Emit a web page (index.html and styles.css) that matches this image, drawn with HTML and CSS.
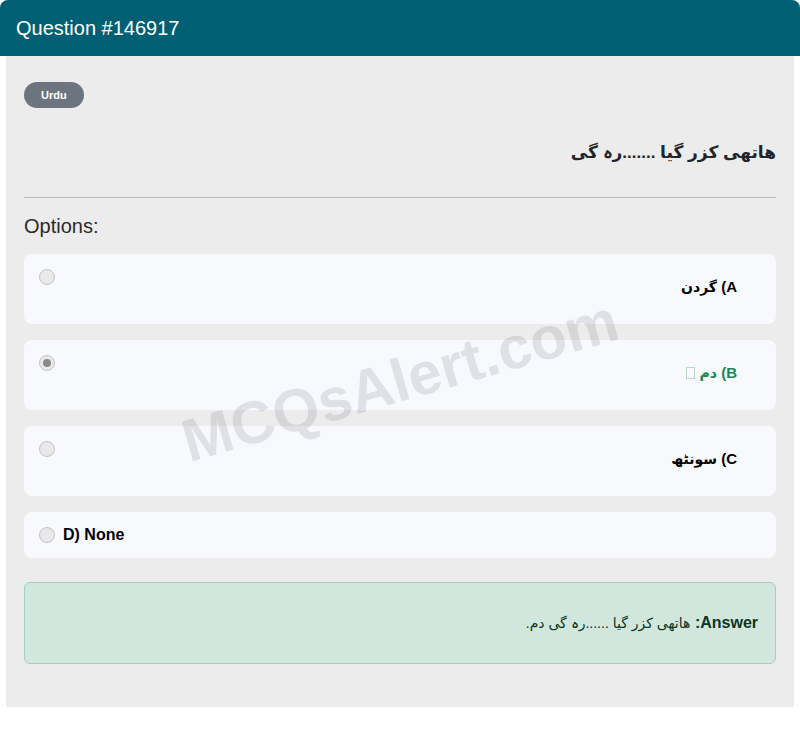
FILE: index.html
```html
<!DOCTYPE html>
<html lang="en">
<head>
<meta charset="utf-8">
<title>Question #146917</title>
<link rel="stylesheet" href="styles.css">
</head>
<body>
<div class="card">
  <div class="card-header">Question #146917</div>
  <div class="card-body">
    <span class="badge">Urdu</span>
    <p class="question" dir="rtl">ھاتھی کزر گیا .......رہ گی</p>
    <hr class="divider">
    <h5 class="options-title">Options:</h5>
    <div class="options">
      <div class="option option-rtl">
        <span class="radio"></span>
        <span class="label" dir="rtl">A) <span class="ur">گردن</span></span>
      </div>
      <div class="option option-rtl">
        <span class="radio radio-checked"></span>
        <span class="label label-correct" dir="rtl">B) <span class="ur">دم</span> <span class="tofu"></span></span>
      </div>
      <div class="option option-rtl">
        <span class="radio"></span>
        <span class="label" dir="rtl">C) <span class="ur">سونٹھ</span></span>
      </div>
      <div class="option">
        <span class="radio"></span>
        <span class="label label-ltr">D) None</span>
      </div>
    </div>
    <div class="answer" dir="rtl"><strong>Answer:</strong> <span class="answer-text">ھاتھی کزر گیا ......رہ گی دم.</span></div>
    <div class="watermark">MCQsAlert.com</div>
  </div>
</div>
</body>
</html>
```
FILE: styles.css
```css
html, body {
  margin: 0;
  padding: 0;
  background: #ffffff;
  font-family: "Liberation Sans", "DejaVu Sans", Arial, sans-serif;
  color: #212529;
}

.card {
  width: 800px;
  background: #ffffff;
  border-radius: 8px 8px 0 0;
}

.card-header {
  height: 56px;
  background: #005f73;
  color: #ffffff;
  font-size: 20px;
  line-height: 56px;
  padding: 0 16px;
  border-radius: 8px 8px 0 0;
}

.card-body {
  position: relative;
  margin: 0 6px;
  padding: 26px 18px 43px;
  background: #ececec;
  overflow: hidden;
}

.badge {
  display: inline-block;
  height: 26px;
  line-height: 26px;
  padding: 0 17px;
  border-radius: 13px;
  background: #6c757d;
  color: #ffffff;
  font-size: 11px;
  font-weight: bold;
  vertical-align: top;
}

.question {
  margin: 31px 0 0;
  font-size: 17px;
  font-weight: bold;
  line-height: 27px;
  text-align: right;
  color: #212529;
}

.divider {
  margin: 31px 0 0;
  border: 0;
  border-top: 1px solid #bdbdbd;
  height: 0;
}

.options-title {
  margin: 16px 0 16px;
  font-size: 20px;
  font-weight: normal;
  line-height: 24px;
  color: #2b2b2b;
}

.options {
  display: flex;
  flex-direction: column;
  gap: 16px;
}

.option {
  display: flex;
  align-items: center;
  gap: 8px;
  padding: 15px;
  background: #f8f9fc;
  border-radius: 8px;
}

.option-rtl {
  align-items: flex-start;
  height: 40px;
}

.radio {
  flex: none;
  width: 14px;
  height: 14px;
  border: 1px solid #c4c4c4;
  border-radius: 50%;
  background: #e9e9e9;
  display: flex;
  align-items: center;
  justify-content: center;
}

.radio-checked::after {
  content: "";
  width: 8px;
  height: 8px;
  border-radius: 50%;
  background: #8a8a8a;
}

.label {
  flex: 1;
  font-size: 15px;
  font-weight: bold;
  line-height: 22px;
  color: #000000;
  text-align: right;
  padding-top: 7px;
  padding-right: 24px;
}

.ur {
  font-size: 14px;
}

.label-ltr {
  font-size: 16px;
  line-height: 16px;
  padding: 0;
  text-align: left;
}

.label-correct {
  color: #198754;
}

.tofu {
  display: inline-block;
  width: 7px;
  height: 10px;
  border: 1px solid #b9d7c5;
  vertical-align: -1px;
  margin-left: 3px;
}

.answer {
  margin-top: 24px;
  padding: 28px 17px;
  background: #d1e7dd;
  border: 1px solid #a3cfbb;
  border-radius: 6px;
  color: #0a3622;
  font-size: 16px;
  line-height: 24px;
  text-align: right;
}

.answer-text {
  font-size: 14px;
}

.watermark {
  position: absolute;
  left: 0;
  right: 0;
  top: 290px;
  text-align: center;
  font-size: 60px;
  font-weight: bold;
  color: rgba(40, 40, 60, 0.11);
  transform: rotate(-16deg);
  pointer-events: none;
  white-space: nowrap;
}
```
